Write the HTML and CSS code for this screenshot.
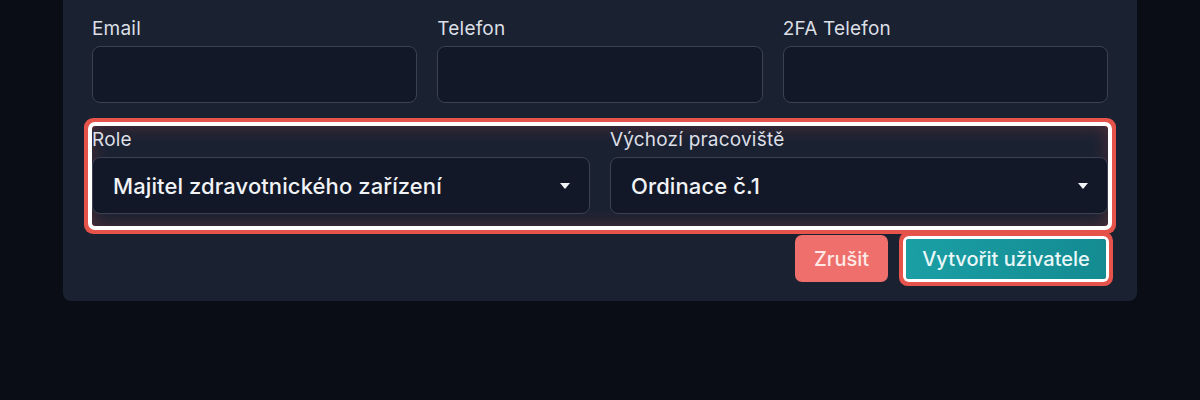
FILE: index.html
```html
<!DOCTYPE html>
<html lang="cs">
<head>
<meta charset="utf-8">
<title>Nový uživatel</title>
<link rel="stylesheet" href="styles.css">
</head>
<body>
<div class="card">
  <div class="grid3">
    <div class="field">
      <label class="label">Email</label>
      <div class="input"></div>
    </div>
    <div class="field">
      <label class="label">Telefon</label>
      <div class="input"></div>
    </div>
    <div class="field">
      <label class="label">2FA Telefon</label>
      <div class="input"></div>
    </div>
  </div>
  <div class="roles highlight">
    <div class="field">
      <label class="label">Role</label>
      <div class="select"><span>Majitel zdravotnického zařízení</span><span class="caret"></span></div>
    </div>
    <div class="field">
      <label class="label">Výchozí pracoviště</label>
      <div class="select"><span>Ordinace č.1</span><span class="caret"></span></div>
    </div>
  </div>
  <div class="actions">
    <button class="btn btn-cancel">Zrušit</button>
    <button class="btn btn-primary highlight-btn">Vytvořit uživatele</button>
  </div>
</div>
</body>
</html>
```
FILE: styles.css
```css
* { box-sizing: border-box; }
html, body { height: 100%; }
body {
  margin: 0;
  background: #0a0d15;
  font-family: "Inter", "Noto Sans", sans-serif;
  overflow: hidden;
}
.card {
  width: 1074px;
  margin: -12px auto 0;
  background: #1a2232;
  border-radius: 8px;
  padding: 27px 29px 19px;
}
.grid3 {
  display: grid;
  grid-template-columns: repeat(3, 1fr);
  gap: 20px;
}
.field { display: flex; flex-direction: column; }
.label {
  font-size: 19px;
  line-height: 28px;
  color: #dcdfe5;
  margin-bottom: 3px;
  letter-spacing: 0.2px;
}
.input {
  height: 57px;
  background: #121827;
  border: 1px solid #3a4252;
  border-radius: 8px;
}
.roles {
  display: grid;
  grid-template-columns: 1fr 1fr;
  gap: 20px;
  margin-top: 23px;
  padding-bottom: 12px;
}
.highlight {
  border-radius: 3px;
  box-shadow: 0 0 0 4px #ffffff, 0 0 0 8px #e5534b, inset 0 0 18px rgba(229, 83, 75, 0.28);
}
.select {
  height: 57px;
  background: #121827;
  border: 1px solid #3a4252;
  border-radius: 8px;
  display: flex;
  align-items: center;
  justify-content: space-between;
  padding: 0 19px 0 20px;
  font-size: 22px;
  font-weight: 500;
  letter-spacing: 0.1px;
  color: #f1f3f6;
}
.caret {
  width: 0;
  height: 0;
  border-left: 5px solid transparent;
  border-right: 5px solid transparent;
  border-top: 6px solid #f1f3f6;
}
.actions {
  display: flex;
  justify-content: flex-end;
  align-items: center;
  gap: 18px;
  margin-top: 9px;
}
.btn {
  font-family: inherit;
  font-size: 20px;
  font-weight: 500;
  border: none;
  border-radius: 7px;
  cursor: pointer;
}
.btn-cancel {
  width: 93px;
  height: 47px;
  background: #ee6f6b;
  color: #fde8e6;
}
.btn-primary {
  width: 200px;
  height: 40px;
  margin-right: 2px;
  background: linear-gradient(90deg, #1a9fa5, #138b91);
  color: #e9f7f8;
  border-radius: 3px;
}
.highlight-btn {
  box-shadow: 0 0 0 3px #ffffff, 0 0 0 7px #e5534b;
}
```
